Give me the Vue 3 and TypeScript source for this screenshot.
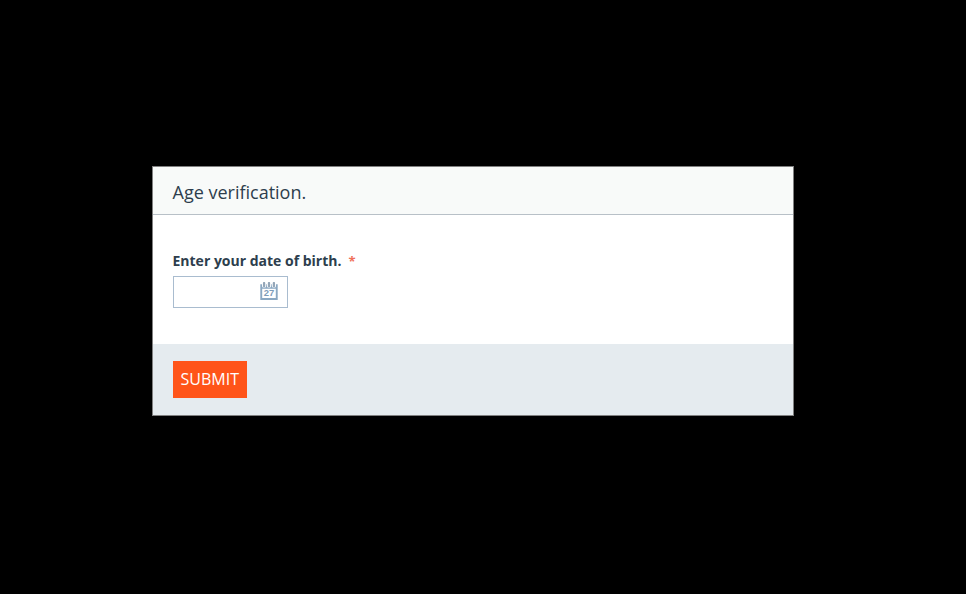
<script setup lang="ts">
import { ref } from 'vue'

const birthDate = ref<string>('')
</script>

<template>
  <main class="page">
    <form class="dialog" @submit.prevent>
      <header class="dialog-header">
        <h1 class="title">Age verification.</h1>
      </header>
      <section class="dialog-body">
        <label class="label" for="birth-date">Enter your date of birth.<span class="required">*</span></label>
        <div class="date-field">
          <input id="birth-date" v-model="birthDate" class="date-input" type="text" />
          <svg class="calendar" width="18" height="19" viewBox="0 0 18 19">
            <path d="M0.300 2.300h17.400v15.700h-17.400z M2.200 6.700v9.300h13.600v-9.300z" fill="#8ba8c2" fill-rule="evenodd" />
            <g fill="#fff">
              <rect x="2" y="0.500" width="4.200" height="5" rx="1.500" />
              <rect x="6.900" y="0.500" width="4.200" height="5" rx="1.500" />
              <rect x="11.800" y="0.500" width="4.200" height="5" rx="1.500" />
            </g>
            <path d="M4.100 1v3.200M9 1v3.200M13.900 1v3.200" fill="none" stroke="#94a6b8" stroke-width="2.300" stroke-linecap="round" />
            <text x="9" y="14.200" text-anchor="middle" textLength="10.500" lengthAdjust="spacingAndGlyphs" class="day">27</text>
          </svg>
        </div>
      </section>
      <footer class="dialog-footer">
        <button class="submit" type="submit">SUBMIT</button>
      </footer>
    </form>
  </main>
</template>

<style>
body {
  background: #000;
}
</style>

<style scoped>
.page {
  box-sizing: border-box;
  height: 594px;
  padding: 166px 0 0 152px;
  background: #000;
  color: #2d3e4d;
  font-family: "Open Sans", sans-serif;
}
.dialog {
  box-sizing: border-box;
  width: 642px;
  height: 250px;
  display: flex;
  flex-direction: column;
  border: 1px solid #808080;
  background: #fff;
}
.dialog-header {
  box-sizing: border-box;
  height: 48px;
  padding: 13px 19.5px 0;
  border-bottom: 1px solid #b8c0c7;
  background: #f8faf9;
}
.title {
  margin: 0;
  font-size: 18px;
  line-height: 25px;
  font-weight: 400;
}
.dialog-body {
  box-sizing: border-box;
  height: 129px;
  padding: 36px 19.5px 0;
}
.label {
  display: block;
  font-size: 14px;
  line-height: 20px;
  font-weight: 700;
}
.required {
  margin-left: 7px;
  color: #f0705a;
  font-size: 13px;
}
.date-field {
  box-sizing: border-box;
  display: flex;
  width: 115px;
  height: 32px;
  margin: 5px 0 0 0.5px;
  padding: 0 9px 0 6px;
  border: 1px solid #a9bccf;
}
.date-input {
  flex: 1;
  min-width: 0;
  padding: 0;
  border: 0;
  outline: 0;
  background: transparent;
  font: inherit;
  font-size: 14px;
}
.calendar {
  flex: none;
  margin-top: 5px;
}
.day {
  fill: #7f9db9;
  font-family: "Liberation Sans", sans-serif;
  font-size: 9.5px;
  font-weight: 700;
}
.dialog-footer {
  flex: 1;
  padding: 17px 20px 0;
  background: #e5ebef;
}
.submit {
  display: block;
  width: 74px;
  height: 37px;
  padding: 0 0.5px 2px 0;
  border: 0;
  background: #ff5419;
  color: #fff;
  font-family: "Open Sans", sans-serif;
  font-size: 16px;
}
</style>
